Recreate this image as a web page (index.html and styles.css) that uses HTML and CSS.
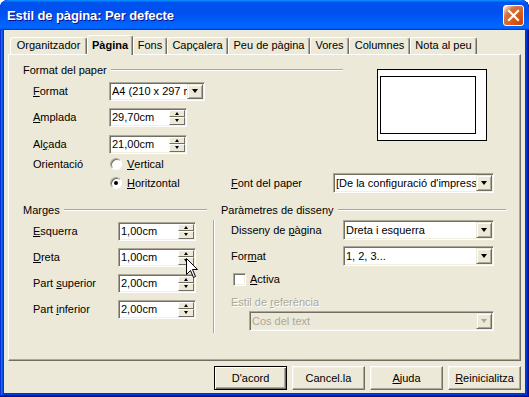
FILE: index.html
```html
<!DOCTYPE html>
<html lang="ca">
<head>
    <meta charset="UTF-8">
    <title>Estil de pàgina: Per defecte</title>
    <link rel="stylesheet" href="styles.css">
</head>
<body>
    <div class="window">
        <div class="titlebar">
            <span class="title">Estil de pàgina: Per defecte</span>
            <div class="close">
                <svg width="19" height="19" viewBox="0 0 19 19">
                    <path d="M5 5 L14 14 M14 5 L5 14" stroke="#fff" stroke-width="2.2" stroke-linecap="square"/>
                </svg>
            </div>
        </div>

        <div class="client">
            <div class="tabs">
                <div class="tab t-org">Organitzador</div>
                <div class="tab active t-pag">Pàgina</div>
                <div class="tab t-fons">Fons</div>
                <div class="tab t-cap">Capçalera</div>
                <div class="tab t-peu">Peu de pàgina</div>
                <div class="tab t-vor">Vores</div>
                <div class="tab t-col">Columnes</div>
                <div class="tab t-nota">Nota al peu</div>
            </div>

            <div class="panel">
                <div class="top">
                    <div class="paper">
                        <div class="group-head head-paper"><span>Format del paper</span><div class="line"></div></div>
                        <div class="row gap5">
                            <span class="lbl lbl-paper"><u>F</u>ormat</span>
                            <div class="combo w-a4 h19"><span class="val">A4 (210 x 297 mm)</span><span class="drop"></span></div>
                        </div>
                        <div class="row gap6">
                            <span class="lbl lbl-paper"><u>A</u>mplada</span>
                            <div class="spin"><span class="val">29,70cm</span><span class="spin-btns"><i class="up"></i><i class="dn"></i></span></div>
                        </div>
                        <div class="row gap7">
                            <span class="lbl lbl-paper">Al<u>ç</u>ada</span>
                            <div class="spin"><span class="val">21,00cm</span><span class="spin-btns"><i class="up"></i><i class="dn"></i></span></div>
                        </div>
                    </div>
                    <div class="preview"><div class="page"></div></div>
                </div>

                <div class="row h19">
                    <span class="lbl lbl-orient">Orientació</span>
                    <span class="radio"><span class="dot"></span><u>V</u>ertical</span>
                </div>
                <div class="row">
                    <span class="lbl lbl-orient"></span>
                    <span class="radio w-hor"><span class="dot on"></span><u>H</u>oritzontal</span>
                    <span class="lbl lbl-font"><u>F</u>ont del paper</span>
                    <div class="combo w-font"><span class="val">[De la configuració d'impressora]</span><span class="drop"></span></div>
                </div>

                <div class="bottom">
                    <div class="margins">
                        <div class="group-head"><span>Marges</span><div class="line"></div></div>
                        <div class="row gap5">
                            <span class="lbl lbl-marg"><u>E</u>squerra</span>
                            <div class="spin"><span class="val">1,00cm</span><span class="spin-btns"><i class="up"></i><i class="dn"></i></span></div>
                        </div>
                        <div class="row gap6">
                            <span class="lbl lbl-marg"><u>D</u>reta</span>
                            <div class="spin"><span class="val">1,00cm</span><span class="spin-btns"><i class="up"></i><i class="dn"></i></span></div>
                        </div>
                        <div class="row gap6">
                            <span class="lbl lbl-marg">Part <u>s</u>uperior</span>
                            <div class="spin"><span class="val">2,00cm</span><span class="spin-btns"><i class="up"></i><i class="dn"></i></span></div>
                        </div>
                        <div class="row gap6">
                            <span class="lbl lbl-marg">Part <u>i</u>nferior</span>
                            <div class="spin"><span class="val">2,00cm</span><span class="spin-btns"><i class="up"></i><i class="dn"></i></span></div>
                        </div>
                    </div>

                    <div class="layout">
                        <div class="group-head head-layout"><span>Paràmetres de disseny</span><div class="line"></div></div>
                        <div class="layout-body">
                            <div class="row flat gap1">
                                <span class="lbl lbl-lay">Disseny de <u>p</u>àgina</span>
                                <div class="combo w-lay"><span class="val">Dreta i esquerra</span><span class="drop"></span></div>
                            </div>
                            <div class="row flat gap6">
                                <span class="lbl lbl-lay">For<u>m</u>at</span>
                                <div class="combo w-lay"><span class="val">1, 2, 3...</span><span class="drop"></span></div>
                            </div>
                            <div class="row flat gap3">
                                <span class="check"></span><span><u>A</u>ctiva</span>
                            </div>
                            <div class="row flat ref-label">
                                <span class="disabled">Estil de <u>r</u>eferència</span>
                            </div>
                            <div class="combo w-ref off"><span class="val">Cos del text</span><span class="drop"></span></div>
                        </div>
                    </div>
                </div>
            </div>

            <div class="buttons">
                <div class="btn default">D'acord</div>
                <div class="btn">Cancel.la</div>
                <div class="btn"><u>A</u>juda</div>
                <div class="btn"><u>R</u>einicialitza</div>
            </div>
        </div>

        <svg class="cursor" width="13" height="20" viewBox="0 0 13 20">
            <polygon points="0.5,0.5 0.5,16.5 4.5,12.5 7.5,19.5 9.5,18.5 6.5,11.5 11.5,11.5" fill="#fff" stroke="#000" stroke-width="1"/>
        </svg>
    </div>
</body>
</html>
```

FILE: styles.css
```css
* {
    box-sizing: border-box;
}

body {
    margin: 0;
    background: #fff;
    font-family: "Liberation Sans", Arial, sans-serif;
    font-size: 11px;
    color: #000;
}

u {
    text-underline-offset: 1px;
}

.window {
    position: relative;
    width: 529px;
    height: 397px;
    display: flex;
    flex-direction: column;
    background-color: #0831d9;
    border-radius: 8px 8px 0 0;
    overflow: hidden;
    box-shadow: inset -1px -1px #00138c, inset 1px 1px #0831d9, inset -2px -2px #001ea0,
        inset 2px 2px #166aee, inset -3px -3px #003bda, inset 3px 3px #0855dd;
}

/* title bar */
.titlebar {
    height: 30px;
    flex: none;
    display: flex;
    align-items: center;
    padding: 0 5px 0 7px;
    background: linear-gradient(180deg, #0997ff, #0053ee 8%, #0050ee 40%, #0066ff 88%, #0066ff 93%, #005bff 95%, #003dd7 96%, #003dd7);
    border-radius: 8px 8px 0 0;
}

.title {
    flex: 1;
    color: #fff;
    font-weight: bold;
    font-size: 13px;
    text-shadow: 1px 1px #0f1089;
    letter-spacing: -0.1px;
}

.close {
    width: 21px;
    height: 21px;
    border: 1px solid #fff;
    border-radius: 3px;
    background: radial-gradient(circle at 90% 90%, #cc4600 0%, #dc6527 55%, #cd7546 70%, #ffccb2 90%, #fff 100%);
    margin-top: 1px;
}

.close svg {
    display: block;
}

/* client area */
.client {
    flex: 1;
    margin: 0 4px 4px;
    padding: 5px 4px 3px;
    background: #ece9d8;
    display: flex;
    flex-direction: column;
}

.tabs {
    height: 19px;
    display: flex;
    align-items: flex-end;
    padding-left: 2px;
}

.tab {
    height: 17px;
    border: 1px solid;
    border-color: #fff #716f64 transparent #fff;
    border-bottom: none;
    border-radius: 3px 3px 0 0;
    box-shadow: inset -1px 0 #aca899;
    text-align: center;
    line-height: 15px;
    white-space: nowrap;
}

.tab.active {
    height: 20px;
    margin-bottom: -1px;
    position: relative;
    z-index: 1;
    background: #ece9d8;
    font-weight: bold;
    line-height: 18px;
}

.t-org { width: 77px; }
.t-pag { width: 46px; }
.t-fons { width: 34px; }
.t-cap { width: 61px; }
.t-peu { width: 82px; }
.t-vor { width: 39px; }
.t-col { width: 61px; }
.t-nota { width: 67px; }

.panel {
    height: 307px;
    border: 1px solid;
    border-color: #fff #716f64 #716f64 #fff;
    box-shadow: inset -1px -1px #aca899;
    padding: 8px 0 0 14px;
}

/* group headings with etched line */
.group-head {
    height: 13px;
    display: flex;
    align-items: center;
    white-space: nowrap;
}

.group-head .line {
    flex: 1;
    margin-left: 4px;
    border-top: 1px solid #aca899;
    border-bottom: 1px solid #fff;
}

.head-paper { width: 320px; }
.head-layout { padding-left: 8px; }

.top {
    display: grid;
    grid-template-columns: 354px 110px;
}

.row {
    height: 20px;
    display: flex;
    align-items: center;
    padding-left: 10px;
    white-space: nowrap;
}

.row.flat { padding-left: 0; }
.row.h19 { height: 19px; }

.gap1 { margin-top: 1px; }
.gap3 { margin-top: 3px; }
.gap5 { margin-top: 5px; }
.gap6 { margin-top: 6px; }
.gap7 { margin-top: 7px; }

.lbl { display: inline-block; }
.lbl-paper { width: 76px; }
.lbl-orient { width: 77px; }
.lbl-font { width: 102px; }
.lbl-marg { width: 85px; }
.lbl-lay { width: 112px; }

/* preview */
.preview {
    width: 110px;
    height: 72px;
    margin-top: 6px;
    border: 1px solid #000;
    background: #fff;
    padding: 6px 10px 6px 2px;
}

.page {
    height: 100%;
    border: 1px solid #000;
}

/* fields */
.spin,
.combo {
    display: flex;
    border: 1px solid;
    border-color: #aca899 #fff #fff #aca899;
    box-shadow: inset 1px 1px #716f64, inset -1px -1px #f1efe2;
    background: #fff;
    padding: 1px;
}

.spin {
    width: 78px;
    height: 19px;
}

.combo {
    height: 20px;
}

.combo.h19 { height: 19px; }

.spin .val,
.combo .val {
    flex: 1;
    overflow: hidden;
    white-space: nowrap;
    padding-left: 1px;
    line-height: 15px;
}

.combo .val { line-height: 16px; }
.combo.h19 .val { line-height: 15px; }

.spin-btns {
    width: 16px;
    display: flex;
    flex-direction: column;
    margin-left: 2px;
}

.spin-btns i {
    flex: 1;
    display: flex;
    align-items: center;
    justify-content: center;
    background: #ece9d8;
    border: 1px solid;
    border-color: #fff #716f64 #716f64 #fff;
}

.spin-btns i::after {
    content: "";
    border-left: 2.5px solid transparent;
    border-right: 2.5px solid transparent;
}

.spin-btns .up::after { border-bottom: 3px solid #000; }
.spin-btns .dn::after { border-top: 3px solid #000; }

.drop {
    width: 16px;
    display: flex;
    align-items: center;
    justify-content: center;
    background: #ece9d8;
    border: 1px solid;
    border-color: #ece9d8 #716f64 #716f64 #ece9d8;
    box-shadow: inset 1px 1px #fff, inset -1px -1px #aca899;
}

.drop::after {
    content: "";
    border-left: 3.5px solid transparent;
    border-right: 3.5px solid transparent;
    border-top: 4px solid #000;
}

.w-a4 { width: 96px; }
.w-font { width: 161px; }
.w-lay { width: 151px; }
.w-ref { width: 245px; margin: 2px 0 0 18px; }

.combo.off {
    background: #ece9d8;
    color: #aca899;
}

.combo.off .drop::after { border-top-color: #aca899; }

/* radio + check */
.radio {
    display: inline-flex;
    align-items: center;
}

.w-hor { width: 121px; }

.dot {
    width: 12px;
    height: 12px;
    margin-right: 5px;
    border-radius: 50%;
    border: 1px solid;
    border-color: #aca899 #fff #fff #aca899;
    box-shadow: inset 1px 1px #716f64;
    background: #fff;
    display: flex;
    align-items: center;
    justify-content: center;
}

.dot.on::after {
    content: "";
    width: 4px;
    height: 4px;
    border-radius: 50%;
    background: #000;
}

.check {
    width: 13px;
    height: 13px;
    margin: 0 4px 0 2px;
    border: 1px solid;
    border-color: #aca899 #fff #fff #aca899;
    box-shadow: inset 1px 1px #716f64, inset -1px -1px #f1efe2;
    background: #fff;
}

.disabled {
    color: #aca899;
    text-shadow: 1px 1px #fff;
}

.ref-label {
    height: 14px;
    margin-top: 6px;
    padding-left: 18px;
}

/* lower part */
.bottom {
    display: flex;
    margin-top: 10px;
}

.margins { width: 184px; }

.layout {
    width: 293px;
    margin-left: 6px;
}

.layout-body {
    height: 113px;
    margin-top: 4px;
    border-left: 1px solid #aca899;
    box-shadow: inset 1px 0 #fff;
    padding-left: 17px;
}

/* buttons */
.buttons {
    display: flex;
    justify-content: flex-end;
    gap: 5px;
    margin-top: 5px;
}

.btn {
    width: 73px;
    height: 24px;
    display: flex;
    align-items: center;
    justify-content: center;
    border: 1px solid;
    border-color: #fff #716f64 #716f64 #fff;
    box-shadow: inset -1px -1px #aca899, inset 1px 1px #f1efe2;
}

.btn.default {
    border-color: #000;
    box-shadow: inset 1px 1px #fff, inset -1px -1px #716f64, inset -2px -2px #aca899;
}

.cursor {
    position: absolute;
    left: 186px;
    top: 258px;
}
```
